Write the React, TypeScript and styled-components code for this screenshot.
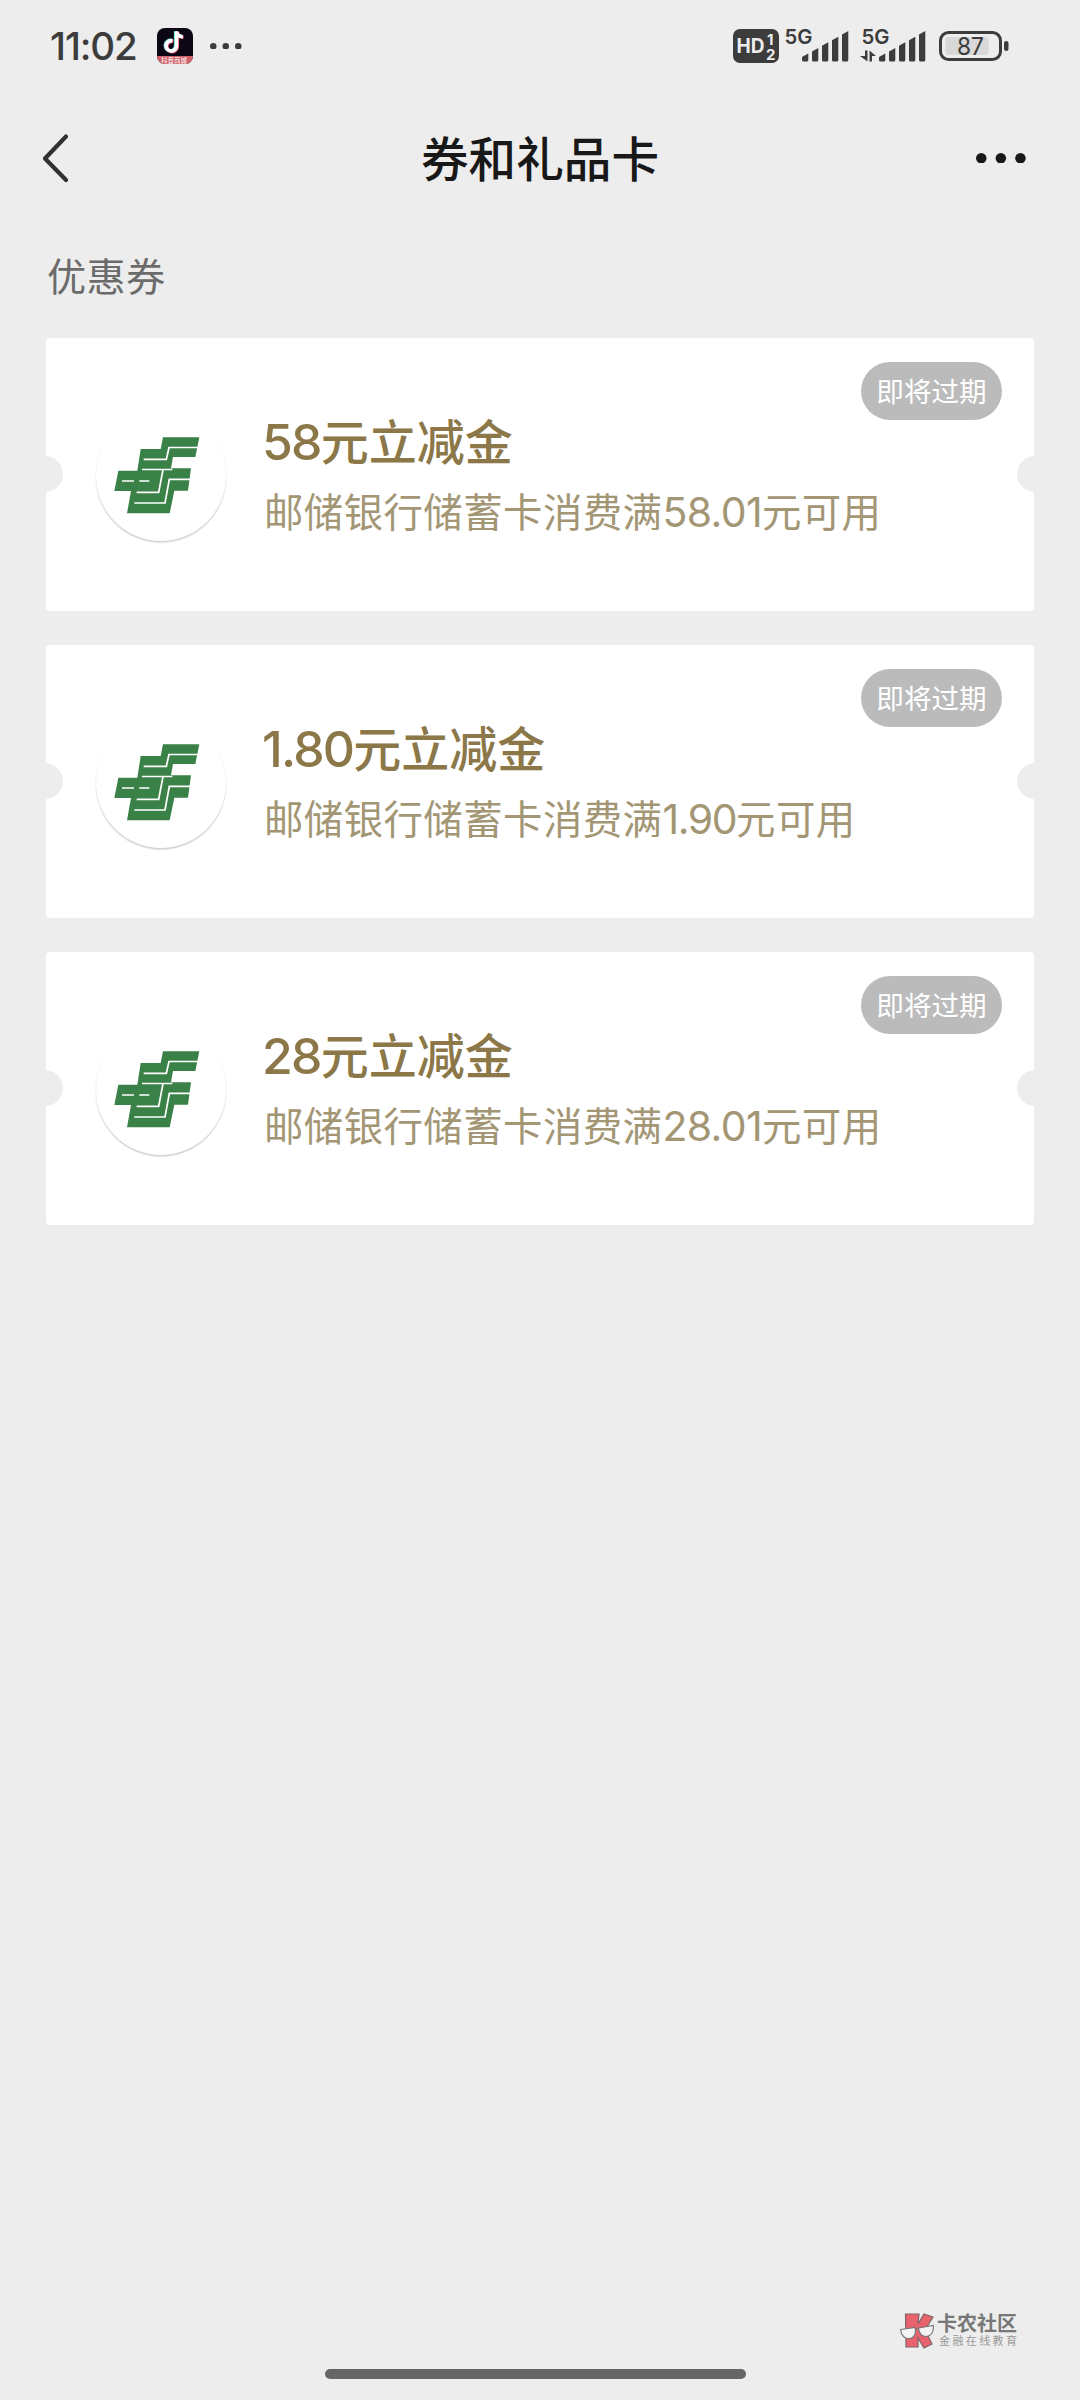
import React from "react";
import styled, { createGlobalStyle } from "styled-components";

const GlobalStyle = createGlobalStyle`
  * { box-sizing: border-box; }
  html, body { margin: 0; background: #ededed; }
  body { font-family: "Noto Sans CJK SC", sans-serif; }
  svg { display: block; flex: none; }
`;

const Screen = styled.div`
  width: 1080px;
  height: 2400px;
  background: #ededed;
  display: flex;
  flex-direction: column;
  overflow: hidden;
`;

const StatusBar = styled.header`
  height: 92px;
  padding: 0 71px 0 50px;
  display: flex;
  align-items: center;
  color: #3c3c3c;
`;

const Clock = styled.span`
  width: 107px;
  font: 500 38.5px/46px Inter, sans-serif;
  letter-spacing: -1.1px;
  white-space: nowrap;
`;

const StatusIcons = styled.div`
  margin-left: auto;
  display: flex;
  align-items: center;
`;

const NavBar = styled.nav`
  height: 132px;
  padding: 0 54px 0 42px;
  display: grid;
  grid-template-columns: 1fr auto 1fr;
  align-items: center;
`;

const NavTitle = styled.h1`
  margin: 0 -12px 3px 0;
  font-size: 47.6px;
  line-height: 70px;
  font-weight: 500;
  color: #181818;
`;

const NavAction = styled.button<{ $end?: boolean }>`
  border: 0;
  padding: 0;
  background: none;
  justify-self: ${(p) => (p.$end ? "end" : "start")};
`;

const SectionTitle = styled.h2`
  margin: 0;
  padding: 20px 0 0 47px;
  height: 114px;
  font-size: 39.2px;
  line-height: 60px;
  letter-spacing: 0.3px;
  font-weight: 400;
  color: #6b6b6b;
`;

const CouponList = styled.main`
  flex: 1;
  padding: 0 46px;
  display: flex;
  flex-direction: column;
  gap: 34px;
`;

const Coupon = styled.article`
  position: relative;
  height: 273px;
  padding: 0 50px;
  display: flex;
  background: #fff;
  border-radius: 4px;
  overflow: hidden;
`;

const Notch = styled.i<{ $right?: boolean }>`
  position: absolute;
  top: 118px;
  ${(p) => (p.$right ? "right" : "left")}: -19px;
  width: 36px;
  height: 36px;
  border-radius: 50%;
  background: #ededed;
`;

const BankLogo = styled.div`
  width: 130px;
  height: 130px;
  margin-top: 73px;
  border-radius: 50%;
  background: #fff;
  box-shadow: 0 1.5px 1.5px rgba(0, 0, 0, 0.2);
`;

const CouponText = styled.div`
  margin: 68px 0 0 38px;
  white-space: nowrap;
`;

const Amount = styled.div`
  margin-left: -2px;
  font-size: 48px;
  line-height: 66px;
  font-weight: 500;
  color: #8b7748;
`;

const Rule = styled.div`
  margin-top: 8px;
  font-size: 39.4px;
  line-height: 60px;
  letter-spacing: 0.45px;
  color: #a39674;
`;

const Digits = styled.span<{ $track?: number }>`
  font-family: Inter, sans-serif;
  font-size: 1.04em;
  line-height: 1;
  letter-spacing: ${(p) => p.$track ?? -0.035}em;
`;

const Badge = styled.span`
  position: absolute;
  top: 24px;
  right: 32px;
  width: 141px;
  height: 58px;
  border-radius: 29px;
  background: #bbb;
  color: #fff;
  font-size: 27.6px;
  line-height: 56px;
  text-align: center;
`;

const Footer = styled.footer`
  height: 87px;
  display: flex;
  flex-direction: column;
  justify-content: space-between;
  padding-bottom: 21px;
`;

const Watermark = styled.div`
  align-self: flex-end;
  margin-right: 62px;
  display: flex;
  gap: 3px;
`;

const WatermarkText = styled.div`
  display: flex;
  flex-direction: column;
  white-space: nowrap;
  font-family: "Liberation Sans", "Noto Sans CJK SC", sans-serif;
`;

const WatermarkName = styled.span`
  font-size: 20px;
  line-height: 22px;
  font-weight: 700;
  color: #777;
`;

const WatermarkTag = styled.span`
  margin: 0 0 0 2px;
  width: 79px;
  font-size: 11px;
  line-height: 13px;
  letter-spacing: 2.4px;
  color: #999;
`;

const HomeBar = styled.div`
  align-self: center;
  width: 421px;
  height: 10px;
  margin-right: 9px;
  border-radius: 5px;
  background: #666;
`;

const NOTE = "M15.5 12.8a5.2 5.2 0 1 0 4 5V3.5c.5 3 3 5 6.3 5.2";

const AppIcon = () => (
  <svg width="36" height="36" viewBox="0 0 36 36">
    <defs>
      <clipPath id="app-clip"><rect width="36" height="36" rx="8" /></clipPath>
    </defs>
    <g clipPath="url(#app-clip)">
      <rect width="36" height="36" fill="#0b0714" />
      <g fill="none" strokeWidth="3.6">
        <path d={NOTE} stroke="#5fdfe2" transform="translate(-.8 -.3)" />
        <path d={NOTE} stroke="#ee5a76" transform="translate(.8 .6)" />
        <path d={NOTE} stroke="#fff" />
      </g>
      <rect y="28" width="36" height="8" fill="#d0616a" />
      <text x="17" y="34.6" fill="#fff" fontSize="6.5" textAnchor="middle" fontFamily="Noto Sans CJK SC">抖音商城</text>
    </g>
  </svg>
);

const Dots = ({ size, step, color }: { size: number; step: number; color: string }) => (
  <svg width={step * 2 + size} height={size}>
    {[0, 1, 2].map((i) => (
      <circle key={i} cx={size / 2 + i * step} cy={size / 2} r={size / 2} fill={color} />
    ))}
  </svg>
);

const MoreNotices = styled.div`
  margin-left: 17px;
`;

const HdIcon = () => (
  <svg width="46" height="34" viewBox="0 0 46 34" fontFamily="Inter, sans-serif" fontWeight="700" fill="#ededed">
    <rect width="46" height="34" rx="7" fill="#3c3c3c" />
    <text x="3.5" y="24" fontSize="20" textLength="28" lengthAdjust="spacingAndGlyphs">HD</text>
    <text x="34" y="15.5" fontSize="15">1</text>
    <text x="33" y="30.5" fontSize="15">2</text>
  </svg>
);

const Signal = ({ data }: { data?: boolean }) => (
  <svg width="64" height="34" viewBox="0 0 64 34" fill="#3c3c3c">
    <text x="-.5" y="15.3" fontFamily="Inter, sans-serif" fontWeight="600" fontSize="20.5" textLength="28" lengthAdjust="spacingAndGlyphs">5G</text>
    {data && <path d="M3 21.5H5.5V32.5L-2 27H3ZM7.5 32.5V21.5L14 27H10V32.5Z" />}
    {[0, 1, 2, 3, 4].map((i) => {
      const x = 17 + i * 10;
      const top = 25.5 - i * 5.6;
      return (
        <path key={i} d={`M${x} ${top + 2.5}L${x + 6.3} ${top - 1}V31a1.5 1.5 0 0 1-1.5 1.5H${x + 1.5}A1.5 1.5 0 0 1 ${x} 31Z`} />
      );
    })}
  </svg>
);

const SignalSlot = styled.div<{ $gap: number }>`
  margin-left: ${(p) => p.$gap}px;
  svg { overflow: visible; }
`;

const Battery = () => (
  <svg width="70" height="30" viewBox="0 0 70 30">
    <rect x="1.5" y="1.5" width="60" height="27" rx="8" fill="none" stroke="#3c3c3c" strokeWidth="3" />
    <rect x="6.5" y="6" width="43" height="18" rx="3" fill="#d8d8d8" />
    <rect x="65" y="10" width="4.5" height="10" rx="2.2" fill="#3c3c3c" />
    <text x="18" y="23.8" textLength="27" lengthAdjust="spacingAndGlyphs" fontFamily="Inter, sans-serif" fontWeight="400" fontSize="24" fill="#3c3c3c">87</text>
  </svg>
);

const PostalMark = () => (
  <svg width="130" height="130" viewBox="0 0 130 130">
    <g transform="translate(-16 -11) scale(.33333)">
      <path fill="#3a8147" d="M249 112H358L346 171H298L289 171H279L273 205H333L324 272H283L269 340H141L153 273H103L115 212H172L182 147H242Z" />
      <path
        fill="none"
        stroke="#fff"
        strokeWidth="5.2"
        d="M355 142.500H267L259 178H191M277 208.500H186M336 238H268L255 309H163M249 209L236 277H170M126 243H162M178 243H208"
      />
    </g>
  </svg>
);

const WatermarkLogo = () => (
  <svg width="34" height="36" viewBox="0 0 34 36">
    <path d="M5.5 1H19L18 11L24 1L33 4L25 17L32 31L24 35L18 25V34H6Z" fill="#e9636f" stroke="#7d6568" strokeWidth="1.2" />
    <path d="M.7 16.5L15 14.5C17 23 12 26 8 25.5C3.5 25 1 21 .7 16.5ZM18.5 15L33.3 12.5C34 19 31 23 26.5 23.5C21.5 23.5 19 20 18.5 15ZM15 16L18.5 15.5" fill="#f4f4f4" stroke="#777" strokeWidth="1.2" />
  </svg>
);

const coupons = [
  { amount: "58", limit: "58.01" },
  { amount: "1.80", limit: "1.90" },
  { amount: "28", limit: "28.01" },
];

export default function App() {
  return (
    <Screen>
      <GlobalStyle />
      <StatusBar>
        <Clock>11:02</Clock>
        <AppIcon />
        <MoreNotices><Dots size={6.5} step={12.5} color="#3c3c3c" /></MoreNotices>
        <StatusIcons>
          <HdIcon />
          <SignalSlot $gap={6}><Signal /></SignalSlot>
          <SignalSlot $gap={13}><Signal data /></SignalSlot>
          <SignalSlot $gap={13}><Battery /></SignalSlot>
        </StatusIcons>
      </StatusBar>
      <NavBar>
        <NavAction aria-label="返回">
          <svg width="27" height="50" viewBox="0 0 27 50" fill="none" stroke="#303030" strokeWidth="4.2" strokeLinecap="round" strokeLinejoin="round">
            <path d="M24 3.500L3 25.500L24 47" />
          </svg>
        </NavAction>
        <NavTitle>券和礼品卡</NavTitle>
        <NavAction $end aria-label="更多">
          <Dots size={10.5} step={19.6} color="#181818" />
        </NavAction>
      </NavBar>
      <SectionTitle>优惠券</SectionTitle>
      <CouponList>
        {coupons.map((c) => (
          <Coupon key={c.amount}>
            <Notch />
            <Notch $right />
            <BankLogo><PostalMark /></BankLogo>
            <CouponText>
              <Amount><Digits>{c.amount}</Digits>元立减金</Amount>
              <Rule>邮储银行储蓄卡消费满<Digits $track={c.limit.length > 4 ? -0.015 : -0.035}>{c.limit}</Digits>元可用</Rule>
            </CouponText>
            <Badge>即将过期</Badge>
          </Coupon>
        ))}
      </CouponList>
      <Footer>
        <Watermark>
          <WatermarkLogo />
          <WatermarkText>
            <WatermarkName>卡农社区</WatermarkName>
            <WatermarkTag>金融在线教育</WatermarkTag>
          </WatermarkText>
        </Watermark>
        <HomeBar />
      </Footer>
    </Screen>
  );
}
